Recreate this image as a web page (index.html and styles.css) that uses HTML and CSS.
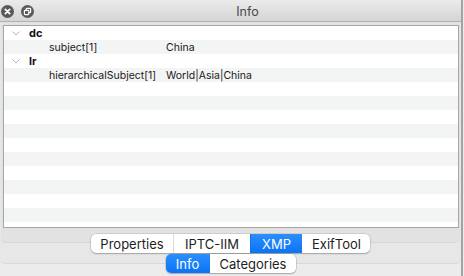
FILE: index.html
```html
<!DOCTYPE html>
<html>
<head>
<meta charset="utf-8">
<link rel="stylesheet" href="styles.css">
</head>
<body>
<div class="window">
  <div class="titlebar">
    <div class="tb-buttons">
      <span class="tb-btn">
        <svg width="13" height="13" viewBox="0 0 13 13"><circle cx="6.5" cy="6.5" r="6.5" fill="#5a5a5a"/><path d="M4.3 4.3 L8.7 8.7 M8.7 4.3 L4.3 8.7" stroke="#fff" stroke-width="1.7" stroke-linecap="round"/></svg>
      </span>
      <span class="tb-btn">
        <svg width="13" height="13" viewBox="0 0 13 13"><circle cx="6.5" cy="6.5" r="6.5" fill="#5a5a5a"/><rect x="5.2" y="3.4" width="4.4" height="4.2" rx="0.8" fill="none" stroke="#fff" stroke-width="1.2"/><rect x="3.4" y="5.4" width="4.4" height="4.2" rx="0.8" fill="#5a5a5a" stroke="#fff" stroke-width="1.2"/></svg>
      </span>
    </div>
    <div class="title">Info</div>
  </div>
  <div class="outer-tabs">
    <div class="outer-box">
      <div class="inner-tabs">
        <div class="inner-box">
          <div class="table">
            <div class="row"><span class="chev"><svg width="8" height="5" viewBox="0 0 8 5"><path d="M0.5 0.5 L4 4 L7.5 0.5" fill="none" stroke="#b4b4b4" stroke-width="1"/></svg></span><span class="group">dc</span></div>
            <div class="row"><span class="key">subject[1]</span><span class="val">China</span></div>
            <div class="row"><span class="chev"><svg width="8" height="5" viewBox="0 0 8 5"><path d="M0.5 0.5 L4 4 L7.5 0.5" fill="none" stroke="#b4b4b4" stroke-width="1"/></svg></span><span class="group">lr</span></div>
            <div class="row"><span class="key">hierarchicalSubject[1]</span><span class="val">World|Asia|China</span></div>
            <div class="row"></div>
            <div class="row"></div>
            <div class="row"></div>
            <div class="row"></div>
            <div class="row"></div>
            <div class="row"></div>
            <div class="row"></div>
            <div class="row"></div>
            <div class="row"></div>
            <div class="row"></div>
            <div class="row"></div>
          </div>
        </div>
        <div class="segmented">
          <span class="seg w-prop">Properties</span>
          <span class="seg w-iptc">IPTC-IIM</span>
          <span class="seg w-xmp selected">XMP</span>
          <span class="seg w-exif">ExifTool</span>
        </div>
      </div>
    </div>
    <div class="segmented outer-seg">
      <span class="seg w-info selected">Info</span>
      <span class="seg w-cat">Categories</span>
    </div>
  </div>
</div>
</body>
</html>
```
FILE: styles.css
```css
html, body {
  margin: 0;
  padding: 0;
}
body {
  width: 464px;
  height: 276px;
  overflow: hidden;
  background: #ececec;
  font-family: Inter, "Noto Sans", sans-serif;
}
.window {
  width: 461px;
  height: 276px;
  border-right: 2px solid #a3a3a3;
  background: #ececec;
}
.titlebar {
  height: 21px;
  border-bottom: 1px solid #b2b2b2;
  background: linear-gradient(#ebebeb, #d5d5d5);
  display: flex;
  align-items: center;
}
.tb-buttons {
  display: flex;
  gap: 7px;
  padding-left: 1px;
  padding-top: 1px;
}
.tb-btn {
  display: block;
  width: 13px;
  height: 13px;
}
.tb-btn svg { display: block; }
.title {
  flex: 1;
  text-align: center;
  font-size: 12.5px;
  color: #4a4a4a;
  margin-top: 1px;
}
.outer-tabs {
  display: flex;
  flex-direction: column;
  align-items: center;
}
.outer-box {
  width: 100%;
  height: 242px;
  box-sizing: border-box;
  background: #e7e7e7;
  border-bottom: 1px solid #d9d9d9;
  border-radius: 0 0 5px 5px;
}
.inner-tabs {
  display: flex;
  flex-direction: column;
  align-items: center;
}
.inner-box {
  box-sizing: border-box;
  width: 459px;
  margin-left: 1px;
  align-self: flex-start;
  height: 221px;
  padding: 3px 0 0 2px;
  background: #e2e2e2;
  border-bottom: 1px solid #d6d6d6;
  border-radius: 0 0 5px 5px;
}
.table {
  width: 456px;
  height: 203px;
  box-sizing: border-box;
  border: 1px solid #a6a6a6;
  background: #fff;
  overflow: hidden;
}
.row {
  height: 14px;
  display: flex;
  align-items: center;
  font-size: 10.5px;
  color: #1a1a1a;
  white-space: nowrap;
}
.row:nth-child(even) {
  background: #f3f4f4;
}
.chev {
  width: 8px;
  margin-left: 8px;
  margin-right: 9px;
  display: flex;
}
.chev svg { display: block; }
.group {
  font-weight: 700;
  font-size: 11px;
  color: #111;
}
.key {
  margin-left: 45px;
  width: 117px;
  flex-shrink: 0;
}
.segmented {
  display: flex;
  margin-top: -9px;
  height: 19px;
  background: #fff;
  border-radius: 5px;
  box-shadow: 0 0 0 0.5px rgba(0,0,0,0.18), 0 1px 1.5px rgba(0,0,0,0.22);
  font-size: 13px;
  color: #1e1e1e;
  overflow: hidden;
}
.outer-seg {
  margin-top: -10px;
}
.seg {
  display: flex;
  align-items: center;
  justify-content: center;
  box-sizing: border-box;
  border-left: 1px solid #dcdcdc;
}
.seg:first-child { border-left: none; }
.seg.selected {
  background: linear-gradient(#2b8efd, #0b74f5);
  color: #fff;
  border-left-color: #0b74f5;
}
.seg.selected + .seg { border-left-color: transparent; }
.w-prop { width: 82px; }
.w-iptc { width: 77px; }
.w-xmp { width: 52px; }
.w-exif { width: 68px; }
.w-info { width: 44px; }
.w-cat { width: 86px; }
```
